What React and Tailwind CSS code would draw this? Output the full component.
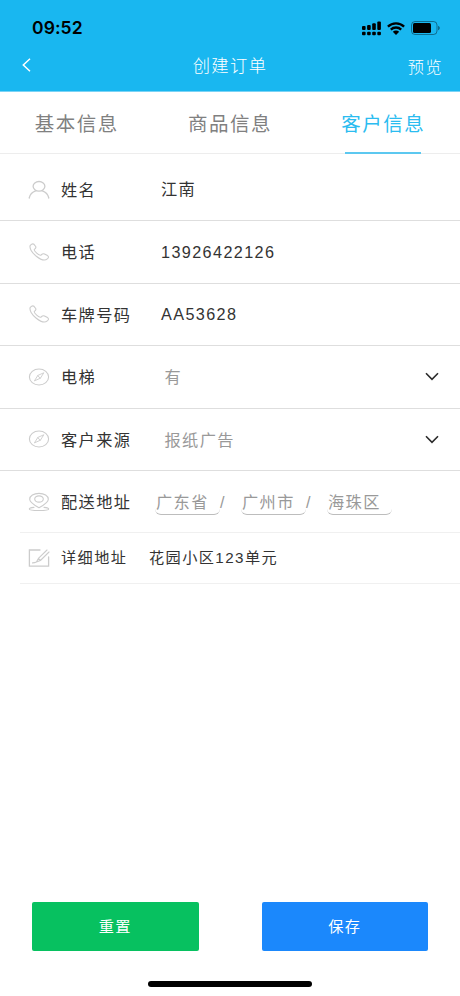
function Svg({ children, className = "", ...rest }) {
  return (
    <svg
      width="22"
      height="20"
      viewBox="0 0 22 20"
      fill="none"
      stroke="#cccccc"
      strokeWidth="1.1"
      strokeLinecap="round"
      strokeLinejoin="round"
      className={"shrink-0 " + className}
      {...rest}
    >
      {children}
    </svg>
  );
}

function PersonIcon() {
  return (
    <Svg>
      <ellipse cx="11" cy="6.3" rx="5.9" ry="4.8" strokeWidth="1.3" />
      <path d="M1.2 18c.8-3.6 3-5.9 6.5-7.1M20.8 18c-.8-3.6-3-5.9-6.5-7.1" strokeWidth="1.3" />
    </Svg>
  );
}

function PhoneIcon() {
  return (
    <Svg>
      <path d="M2.300 3.300C3.500 2 5 1.500 6 2.300l1.700 2.200c.7 1.200-.1 2-1.300 2.900-.5.600.3 2 2.300 3.700 2.100 1.800 3.600 2.400 4.400 1.900 1.200-1.200 2.200-1.600 3.400-1.100l3 1.700c1.400.9 1.200 2.200-.2 3.300-2.400 1.900-6.400 1-11-2.700C3.800 10.800 1 6 2.300 3.300Z" />
    </Svg>
  );
}

function CompassIcon() {
  return (
    <Svg>
      <ellipse cx="11" cy="10" rx="9.6" ry="8" />
      <path d="M15.600 6.100 12.400 11.200 6.400 13.900 9.600 8.800ZM9.600 8.800 12.400 11.200" strokeWidth="0.9" />
    </Svg>
  );
}

function PinIcon() {
  return (
    <Svg>
      <path d="M11 15.800C6 13 1.700 10.200 1.700 7.200c0-3.300 4-5.800 9.300-5.800s9.300 2.500 9.300 5.800c0 3-4.300 5.800-9.300 8.600Z" />
      <ellipse cx="11" cy="7" rx="4.3" ry="3.1" />
      <path d="M6 15.400c-3 .3-4.700.9-4.700 1.600 0 1 4.200 1.500 9.700 1.500s9.700-.5 9.700-1.500c0-.7-1.700-1.300-4.700-1.600" />
    </Svg>
  );
}

function EditIcon() {
  return (
    <Svg>
      <path d="M12 2H1.400v16.200h19.200V9" strokeWidth="1.3" strokeLinejoin="miter" />
      <path d="M19 2 10.400 10.400l-2 3.600 4-1.500L21 4M10.400 10.400l2 2.100M4.500 14.900c1.500 0 2.800-.3 3.900-.9" />
    </Svg>
  );
}

function Chevron() {
  return (
    <svg width="14" height="9" viewBox="0 0 14 9" fill="none" stroke="#2b2b2b" strokeWidth="1.6" className="ml-auto mr-[21px]">
      <path d="M1 1.200 7 7.300 13 1.200" />
    </svg>
  );
}

function Row({ icon, label, value, select, first }) {
  return (
    <div className={"flex items-center border-b border-[#dedede] pl-7 " + (first ? "h-[67px] pt-[5px]" : "h-[62.5px]")}>
      {icon}
      <span className="ml-[11px] w-[100px] pt-px">{label}</span>
      <span className={select ? "ml-[3.5px] pt-px text-[#999999]" : ""}>{value}</span>
      {select && <Chevron />}
    </div>
  );
}

function StatusBar() {
  return (
    <div className="flex h-14 items-center justify-between pl-8 pr-5">
      <span className="font-['Inter'] text-[17.5px] font-semibold leading-none tracking-[0.1px] text-black">09:52</span>
      <div className="flex items-center gap-1.5 text-black">
        <svg width="19" height="15" viewBox="0 0 19 15" fill="currentColor">
          <rect x="0" y="5" width="3.6" height="4" rx="1" />
          <rect x="5.1" y="4" width="3.6" height="5" rx="1" />
          <rect x="10.2" y="2.3" width="3.6" height="6.7" rx="1" />
          <rect x="15.3" y="0.5" width="3.6" height="8.5" rx="1" />
          <rect x="0" y="10.7" width="3.6" height="3.6" rx="1" />
          <rect x="5.1" y="10.7" width="3.6" height="3.6" rx="1" />
          <rect x="10.2" y="10.7" width="3.6" height="3.6" rx="1" />
          <rect x="15.3" y="10.7" width="3.6" height="3.6" rx="1" />
        </svg>
        <svg width="18" height="13" viewBox="0 0 18 13" fill="none" stroke="currentColor" strokeWidth="2.3">
          <path d="M.9 4.600C5.400.2 12.600.2 17.100 4.600M3.800 7.600c2.900-2.800 7.500-2.800 10.400 0" />
          <path d="M9 12.900 5.800 9.800c1.800-1.600 4.600-1.600 6.400 0Z" fill="currentColor" stroke="none" />
        </svg>
        <svg width="29" height="14" viewBox="0 0 29 14" fill="none">
          <rect x="0.5" y="0.5" width="25.5" height="13" rx="3.5" stroke="#000" strokeOpacity=".4" />
          <rect x="2" y="2" width="18" height="10" rx="1.5" fill="#000" />
          <path d="M27.200 4.700c2 .8 2 3.800 0 4.600Z" fill="#000" fillOpacity=".5" />
        </svg>
      </div>
    </div>
  );
}

function Region({ children }) {
  return (
    <span className="flex h-[26px] w-[65px] items-center rounded-[6px] border-b border-[#bdbdbd] pl-px pt-px">{children}</span>
  );
}

export default function App() {
  return (
    <div className="flex h-[996px] w-[460px] flex-col overflow-hidden bg-white font-['Liberation_Sans','Noto_Sans_CJK_SC',sans-serif] text-[16.2px] leading-none tracking-[1.4px] text-[#333333]">
      <header className="h-[92px] shrink-0 border-b border-[#7bd3f5] bg-[#19b7f0] text-white">
        <StatusBar />
        <div className="grid h-5 grid-cols-3 items-center">
          <svg width="9" height="14" viewBox="0 0 9 14" fill="none" stroke="#fff" strokeWidth="1.5" className="ml-[21.5px] -mt-0.5">
            <path d="M8 .8 1.300 7 8 13.200" />
          </svg>
          <h1 className="pt-0.5 text-center text-[17.3px] font-light">创建订单</h1>
          <span className="pr-[17px] pt-[3px] text-right font-light">预览</span>
        </div>
      </header>

      <nav className="grid h-[62px] shrink-0 grid-cols-3 border-b border-[#ededed] text-[19.5px] tracking-[1.5px] text-[#808080]">
        <span className="flex items-center justify-center pt-[5px]">基本信息</span>
        <span className="flex items-center justify-center pt-[5px]">商品信息</span>
        <span className="-mb-px flex flex-col items-center text-[#2bbcf0]">
          <span className="flex h-[60px] items-center pt-[5px]">客户信息</span>
          <span className="h-[2px] w-[76px] bg-[#5cc8f0]" />
        </span>
      </nav>

      <main className="flex flex-col">
        <Row first icon={<PersonIcon />} label="姓名" value="江南" />
        <Row icon={<PhoneIcon />} label="电话" value="13926422126" />
        <Row icon={<PhoneIcon />} label="车牌号码" value="AA53628" />
        <Row select icon={<CompassIcon />} label="电梯" value="有" />
        <Row select icon={<CompassIcon />} label="客户来源" value="报纸广告" />
        <div className="ml-5 flex h-[62px] items-center border-b border-[#f0f0f0] pl-2 pt-px">
          <PinIcon />
          <span className="ml-[11px] w-[94px]">配送地址</span>
          <div className="flex items-center text-[#999999]">
            <Region>广东省</Region>
            <span className="w-[21px]">/</span>
            <Region>广州市</Region>
            <span className="w-[21px]">/</span>
            <Region>海珠区</Region>
          </div>
        </div>
        <div className="ml-5 flex h-[51px] items-center border-b border-[#f0f0f0] pl-2 text-[15.2px]">
          <EditIcon />
          <span className="ml-[11px] w-[88px]">详细地址</span>
          <span>花园小区123单元</span>
        </div>
      </main>

      <footer className="mt-auto flex flex-col items-center">
        <div className="flex w-full justify-between px-8 text-[15.2px] text-white">
          <button className="h-[49px] w-[166.5px] rounded-[2px] bg-[#07c160]">重置</button>
          <button className="h-[49px] w-[166.5px] rounded-[2px] bg-[#1b88fc]">保存</button>
        </div>
        <div className="mb-[9px] mt-[30px] h-[6px] w-[164px] rounded-full bg-black" />
      </footer>
    </div>
  );
}
